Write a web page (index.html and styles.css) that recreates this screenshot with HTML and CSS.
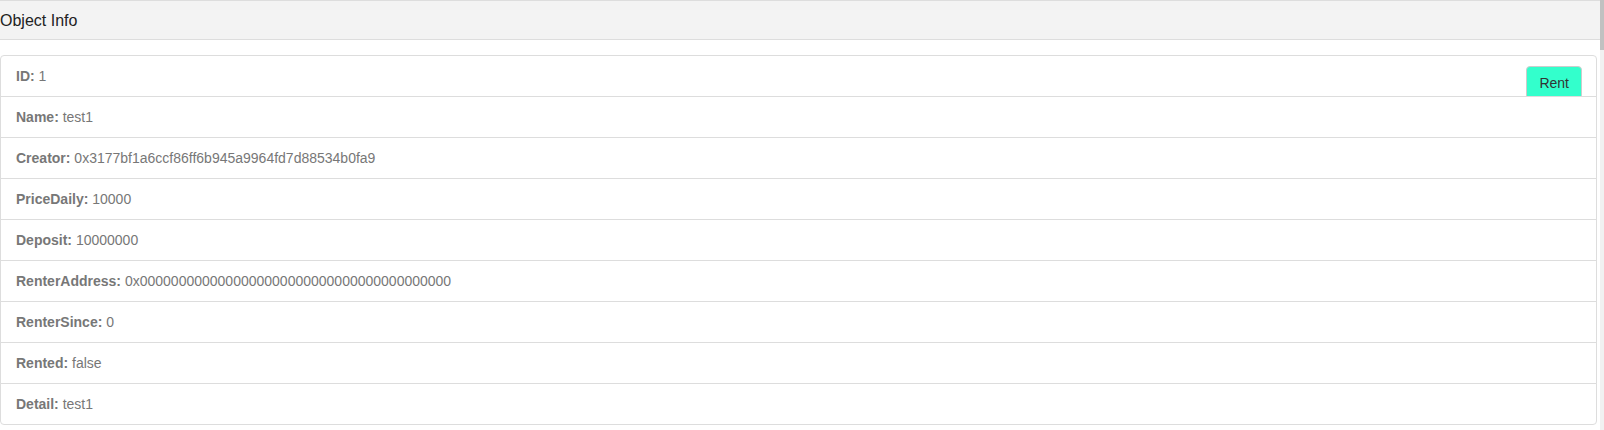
FILE: index.html
```html
<!DOCTYPE html>
<html lang="en">
<head>
<meta charset="utf-8">
<title>Object Info</title>
<link rel="stylesheet" href="styles.css">
</head>
<body>
<div class="page">
  <main class="content">
    <div class="heading">Object Info</div>
    <ul class="list">
      <li class="item"><button class="btn-rent" type="button">Rent</button><b>ID:</b> 1</li>
      <li class="item"><b>Name:</b> test1</li>
      <li class="item"><b>Creator:</b> 0x3177bf1a6ccf86ff6b945a9964fd7d88534b0fa9</li>
      <li class="item"><b>PriceDaily:</b> 10000</li>
      <li class="item"><b>Deposit:</b> 10000000</li>
      <li class="item"><b>RenterAddress:</b> 0x0000000000000000000000000000000000000000</li>
      <li class="item"><b>RenterSince:</b> 0</li>
      <li class="item"><b>Rented:</b> false</li>
      <li class="item"><b>Detail:</b> test1</li>
    </ul>
  </main>
  <div class="scrollbar"><div class="thumb"></div></div>
</div>
</body>
</html>
```

FILE: styles.css
```css
html, body {
  margin: 0;
  padding: 0;
  height: 100%;
  overflow: hidden;
  background: #fff;
}

body {
  font-family: "Liberation Sans", Arial, sans-serif;
  font-size: 14px;
  line-height: 20px;
  color: #333;
}

.page {
  display: flex;
  height: 430px;
}

.content {
  flex: 1;
  min-width: 0;
}

.heading {
  background: #f3f3f3;
  border-top: 1px solid #ddd;
  border-bottom: 1px solid #ddd;
  padding: 10px 0 9px;
  font-size: 16px;
  line-height: 19px;
  color: #222;
}

.list {
  list-style: none;
  margin: 15px 3px 0 0;
  padding: 0;
}

.item {
  position: relative;
  display: block;
  padding: 10px 15px;
  margin-bottom: -1px;
  background: #fff;
  border: 1px solid #ddd;
  color: #777;
}

.item:first-child {
  border-top-left-radius: 4px;
  border-top-right-radius: 4px;
}

.item:last-child {
  margin-bottom: 0;
  border-bottom-left-radius: 4px;
  border-bottom-right-radius: 4px;
}

.item:nth-child(n+2) {
  z-index: 1;
}

.item b {
  font-weight: bold;
}

.btn-rent {
  float: right;
  margin-right: -1px;
  padding: 6px 12px;
  font-family: "Liberation Sans", Arial, sans-serif;
  font-size: 14px;
  line-height: 20px;
  color: #333;
  background: #33ffcc;
  border: 1px solid #ccc;
  border-radius: 4px;
  cursor: pointer;
}

.scrollbar {
  width: 4px;
  background: #f1f1f1;
}

.thumb {
  height: 50px;
  background: #c1c1c1;
}
```
